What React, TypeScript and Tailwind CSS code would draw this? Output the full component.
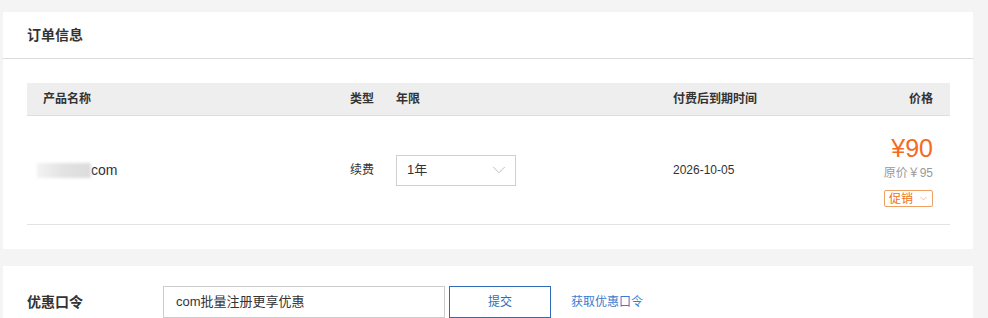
import { ChevronDown } from "lucide-react";

const font = "font-['Liberation_Sans','Noto_Sans_CJK_SC',sans-serif]";

export default function App() {
  return (
    <div className={`h-[318px] w-[988px] overflow-hidden bg-[#f4f4f4] pl-[3px] pt-[12px] ${font}`}>
      {/* Order info card */}
      <div className="w-[970px] bg-white pb-[24px]">
        <div className="flex h-[47px] items-center border-b border-[#dcdcdc] px-[24px] pt-[1px]">
          <h2 className="text-[14px] font-bold text-[#333]">订单信息</h2>
        </div>

        <div className="mx-[24px] mt-[24px] w-[923px]">
          <div className="grid h-[33px] grid-cols-[307px_46px_277px_1fr_auto] items-center border-b border-[#dedede] bg-[#eeeeee] pl-[16px] pr-[17px] text-[12px] font-bold text-[#333]">
            <div>产品名称</div>
            <div>类型</div>
            <div>年限</div>
            <div>付费后到期时间</div>
            <div className="text-right">价格</div>
          </div>

          <div className="grid h-[109px] grid-cols-[307px_46px_277px_1fr_auto] items-center border-b border-[#e3e3e3] pl-[16px] pr-[17px] text-[12px] text-[#333]">
            <div className="-ml-[6px] flex items-center text-[14px] text-[#333]">
              <span className="h-[15px] w-[54px] bg-gradient-to-r from-[#f3f3f3] via-[#e2e2e2] to-[#dcdcdc] blur-[1.5px]" />
              <span>com</span>
            </div>
            <div>续费</div>
            <div>
              <div className="flex h-[31px] w-[120px] items-center justify-between border border-[#d0d0d0] pl-[10px] pr-[5px] text-[13px] text-[#333]">
                <span>1年</span>
                <ChevronDown className="h-[22px] w-[22px] text-[#b0b0b0]" strokeWidth={0.9} />
              </div>
            </div>
            <div className="text-[12px]">2026-10-05</div>
            <div className="mt-[1px] flex flex-col items-end">
              <div className="text-[25px] leading-[28px] text-[#f56a1f]">¥90</div>
              <div className="mt-[3px] text-[12px] leading-[16px] text-[#999]">原价￥95</div>
              <div className="mt-[9px] flex h-[17px] w-[49px] items-center justify-between rounded-[2px] border border-[#f0a060] pl-[4px] pr-[3px] text-[12px] leading-none text-[#f07020]">
                <span>促销</span>
                <ChevronDown className="h-[11px] w-[11px] text-[#f0a060]" strokeWidth={1.4} />
              </div>
            </div>
          </div>
        </div>
      </div>

      {/* Coupon card */}
      <div className="mt-[17px] flex w-[970px] items-start bg-white px-[24px] pt-[20px] pb-[20px]">
        <div className="flex h-[32px] w-[136px] items-center text-[14px] font-bold text-[#333]">优惠口令</div>
        <div className="flex h-[32px] w-[282px] items-center border border-[#ccc] px-[12px] text-[13px] text-[#333]">
          com批量注册更享优惠
        </div>
        <button className="ml-[4px] h-[32px] w-[102px] border border-[#2e6db5] text-[12px] text-[#2e6db5]">提交</button>
        <a className="ml-[20px] flex h-[32px] items-center text-[12px] text-[#3b7bd0]">获取优惠口令</a>
      </div>
    </div>
  );
}
